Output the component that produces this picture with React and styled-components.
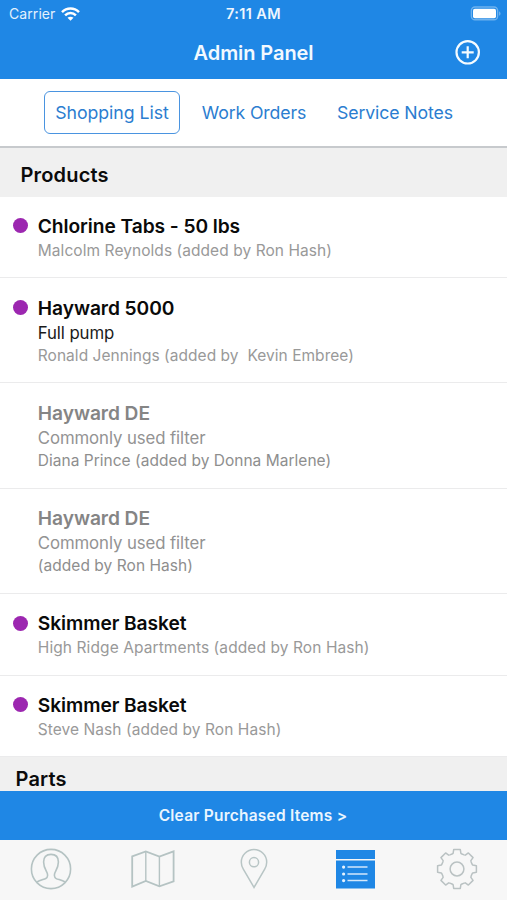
import React from "react";
import styled, { createGlobalStyle } from "styled-components";

const BLUE = "#1f87e5";
const LINE = "#b5c3c3";

const GlobalStyle = createGlobalStyle`
  * { box-sizing: border-box; }
  body { margin: 0; background: #fff; font-family: "Inter", sans-serif; }
`;

const Screen = styled.div`
  display: flex;
  flex-direction: column;
  width: 507px;
  height: 900px;
  overflow: hidden;
  background: #fff;
`;

const Header = styled.header`
  display: flex;
  flex-direction: column;
  flex: none;
  height: 79px;
  background: ${BLUE};
  color: #fff;
`;

const StatusBar = styled.div`
  display: grid;
  grid-template-columns: 1fr auto 1fr;
  align-items: center;
  height: 27px;
  padding: 0 6px 0 9px;
`;

const Carrier = styled.div`
  display: flex;
  align-items: center;
  gap: 6px;
  color: #e3f1fd;
  font-size: 14px;
  letter-spacing: 0.08px;
`;

const Clock = styled.div`
  padding-right: 3px;
  font-size: 14.5px;
  font-weight: 600;
  letter-spacing: 0.4px;
  color: #eef6fe;
`;

const Battery = styled.svg`
  justify-self: end;
`;

const NavBar = styled.div`
  display: grid;
  grid-template-columns: 1fr auto 1fr;
  align-items: center;
  height: 51px;
  padding: 0 26px;
`;

const Title = styled.h1`
  grid-column: 2;
  margin: 0;
  font-size: 20px;
  font-weight: 600;
  letter-spacing: -0.08px;
  line-height: 24px;
  color: #f2f9ff;
`;

const AddButton = styled.button`
  display: flex;
  justify-self: end;
  padding: 0;
  border: 0;
  background: none;
`;

const Tabs = styled.nav`
  display: flex;
  align-items: center;
  flex: none;
  height: 69px;
  padding: 0 0 1px 44px;
  gap: 2px;
  border-bottom: 2px solid #c7cacd;
`;

const Tab = styled.button`
  height: 43px;
  width: ${(p) => p.$width}px;
  padding: 1px 0 0;
  border: 1.5px solid ${(p) => (p.$active ? "#4a94e0" : "transparent")};
  border-radius: 6px;
  background: none;
  color: #2b7dd0;
  font: 400 17.7px "Inter", sans-serif;
  letter-spacing: ${(p) => p.$spacing}px;
  white-space: nowrap;
`;

const List = styled.main`
  flex: 1;
  min-height: 0;
  overflow: hidden;
`;

const SectionHeader = styled.h2`
  margin: 0;
  height: 48.5px;
  padding-left: ${(p) => p.$inset}px;
  background: #f0f0f0;
  color: #0b0b0b;
  font-size: 20px;
  font-weight: 600;
  line-height: ${(p) => p.$line}px;
  letter-spacing: 0.17px;
`;

const Row = styled.article`
  display: grid;
  grid-template-columns: 24.8px 1fr;
  height: ${(p) => (p.$tall ? 105.2 : 81.8)}px;
  padding: 17.6px 0 0 13px;
  border-bottom: 1.4px solid #ebebec;
`;

const Dot = styled.span`
  width: 15px;
  height: 15px;
  margin-top: 4.2px;
  border-radius: 50%;
  background: ${(p) => (p.$on ? "#9c27b0" : "transparent")};
`;

const RowText = styled.div`
  display: flex;
  flex-direction: column;
  white-space: pre;
`;

const Name = styled.div`
  color: ${(p) => (p.$muted ? "#858585" : "#0a0a0a")};
  font-size: 19.2px;
  font-weight: 600;
  line-height: 24.5px;
  letter-spacing: -0.07px;
`;

const Detail = styled.div`
  padding-top: 0.4px;
  color: ${(p) => (p.$muted ? "#939393" : "#1a1a1a")};
  font-size: 16.8px;
  line-height: 24.5px;
  letter-spacing: -0.1px;
`;

const Note = styled.div`
  margin-top: ${(p) => (p.$direct ? 1 : -0.2)}px;
  color: ${(p) => (p.$muted ? "#8e8e8e" : "#999")};
  font-size: 15.5px;
  line-height: 22px;
  letter-spacing: ${(p) => p.$spacing}px;
`;

const ClearButton = styled.button`
  flex: none;
  height: 49px;
  border: 0;
  padding: 0 1px 0 0;
  background: ${BLUE};
  color: #eaf5ff;
  font: 600 15.5px "Inter", sans-serif;
  letter-spacing: 0.22px;
`;

const TabBar = styled.footer`
  display: grid;
  grid-template-columns: repeat(5, 1fr);
  flex: none;
  height: 60px;
  background: #f7f7f7;
`;

const TabItem = styled.button`
  display: flex;
  align-items: center;
  justify-content: center;
  padding: 0 0 2px 1.4px;
  border: 0;
  background: none;
`;

const ITEMS = [
  { name: "Chlorine Tabs - 50 lbs", note: "Malcolm Reynolds (added by Ron Hash)", spacing: 0.06 },
  { name: "Hayward 5000", detail: "Full pump", note: "Ronald Jennings (added by  Kevin Embree)", spacing: 0.04 },
  { name: "Hayward DE", detail: "Commonly used filter", note: "Diana Prince (added by Donna Marlene)", spacing: 0.02, done: true },
  { name: "Hayward DE", detail: "Commonly used filter", note: "(added by Ron Hash)", spacing: 0.05, done: true },
  { name: "Skimmer Basket", note: "High Ridge Apartments (added by Ron Hash)", spacing: 0.09 },
  { name: "Skimmer Basket", note: "Steve Nash (added by Ron Hash)", spacing: 0.06 },
];

const WifiIcon = () => (
  <svg width="19" height="14" viewBox="0 0 19 14" fill="none" stroke="#fff" strokeWidth="2.5">
    <path d="M1 5.1C5.8.3 13.2.3 18 5.1" />
    <path d="M4.1 8.3c3-3 7.8-3 10.8 0" />
    <path d="M9.5 13.8 6.5 10.8c1.7-1.5 4.3-1.5 6 0z" fill="#fff" stroke="none" />
  </svg>
);

const BatteryIcon = () => (
  <Battery width="31" height="15" viewBox="0 0 31 15">
    <rect x="1.4" y="1" width="26.2" height="12.8" rx="3.6" fill="none" stroke="#6fb2ee" strokeWidth="1.4" />
    <rect x="3" y="2.7" width="23" height="9.6" rx="1.8" fill="#fff" />
    <path d="M29.2 5.2c1.7.8 1.7 3.8 0 4.6z" fill="#7dbaf0" />
  </Battery>
);

const AddIcon = () => (
  <svg width="26" height="26" viewBox="0 0 26 26" fill="none" stroke="#f5fbff" strokeWidth="2.2">
    <circle cx="12.7" cy="12.3" r="11.2" />
    <path d="M12.7 6.3v12M6.7 12.3h12" />
  </svg>
);

const ProfileIcon = () => (
  <svg width="42" height="42" viewBox="0 0 42 42" fill="none" stroke={LINE} strokeWidth="1.6">
    <circle cx="21" cy="21" r="19.6" />
    <path d="M7 34c2.8-1.9 6.6-2.4 8.8-3.4 2.3-1.1 2.1-4.3 1-6.4-1.4-2.6-3.2-5.4-3.2-10.2 0-4.8 2.4-7.6 7.4-7.6s7.4 2.8 7.4 7.6c0 4.8-1.8 7.6-3.2 10.2-1.1 2.1-1.3 5.3 1 6.4 2.2 1 6 1.5 8.8 3.4" />
  </svg>
);

const MapIcon = () => (
  <svg width="44" height="40" viewBox="0 0 44 40" fill="none" stroke={LINE}>
    <path d="M1.2 7.4 14.8 2.4 28.4 7.6 42.6 2.4V32.4L28.4 37.4 14.8 32 1.2 37.6z" strokeWidth="1.8" />
    <path d="M14.8 2.4V32M28.4 7.6V37.4" strokeWidth="1.4" />
  </svg>
);

const PinIcon = () => (
  <svg width="28" height="42" viewBox="0 0 28 42" fill="none" stroke="#b8c5c5" strokeWidth="1.5">
    <path d="M14 39.4 3.3 21.2C2 18.9 1.3 16.8 1.3 14.2a12.7 12.7 0 0 1 25.4 0c0 2.6-.7 4.7-2 7z" />
    <circle cx="14" cy="14.2" r="4.6" />
  </svg>
);

const ListIcon = () => (
  <svg width="39" height="39" viewBox="0 0 39 39">
    <path d="M0 0h39v9H0zM0 10.5h39V38.5H0z" fill={BLUE} />
    <path d="M11.5 17.1h20M11.5 24h20M11.5 30.6h20" stroke="#d4e8fb" strokeWidth="1.5" />
    <g fill="#e6f2fd">
      <circle cx="7.6" cy="17.1" r="1.6" />
      <circle cx="7.6" cy="24" r="1.6" />
      <circle cx="7.6" cy="30.6" r="1.6" />
    </g>
  </svg>
);

// Eight-toothed outline: each tooth is drawn pointing up, then turned by 45 degrees.
const gearPath = () => {
  const tooth = [[-5, -15], [-3.9, -15.7], [-3.3, -19.4], [3.3, -19.4], [3.9, -15.7], [5, -15]];
  const points = [];
  for (let i = 0; i < 8; i += 1) {
    const a = (i * Math.PI) / 4;
    tooth.forEach(([x, y]) => {
      points.push(`${(x * Math.cos(a) - y * Math.sin(a)).toFixed(2)} ${(x * Math.sin(a) + y * Math.cos(a)).toFixed(2)}`);
    });
  }
  return `M${points.join("L")}Z`;
};

const GearIcon = () => (
  <svg width="42" height="42" viewBox="-21 -21 42 42" fill="none" stroke="#bac2c3" strokeWidth="1.5" strokeLinejoin="round">
    <path d={gearPath()} />
    <circle r="6.9" />
  </svg>
);

export default function App() {
  return (
    <Screen>
      <GlobalStyle />
      <Header>
        <StatusBar>
          <Carrier>Carrier<WifiIcon /></Carrier>
          <Clock>7:11 AM</Clock>
          <BatteryIcon />
        </StatusBar>
        <NavBar>
          <Title>Admin Panel</Title>
          <AddButton aria-label="Add"><AddIcon /></AddButton>
        </NavBar>
      </Header>
      <Tabs>
        <Tab $active $width={136} $spacing={-0.03}>Shopping List</Tab>
        <Tab $width={144} $spacing={-0.12}>Work Orders</Tab>
        <Tab $width={134} $spacing={-0.11}>Service Notes</Tab>
      </Tabs>
      <List>
        <SectionHeader $inset={20.5} $line={54}>Products</SectionHeader>
        {ITEMS.map((item, i) => (
          <Row key={i} $tall={Boolean(item.detail)}>
            <Dot $on={!item.done} />
            <RowText>
              <Name $muted={item.done}>{item.name}</Name>
              {item.detail && <Detail $muted={item.done}>{item.detail}</Detail>}
              <Note $direct={!item.detail} $muted={item.done} $spacing={item.spacing}>{item.note}</Note>
            </RowText>
          </Row>
        ))}
        <SectionHeader $inset={15.5} $line={44}>Parts</SectionHeader>
      </List>
      <ClearButton>Clear Purchased Items &gt;</ClearButton>
      <TabBar>
        <TabItem aria-label="Profile"><ProfileIcon /></TabItem>
        <TabItem aria-label="Map"><MapIcon /></TabItem>
        <TabItem aria-label="Location"><PinIcon /></TabItem>
        <TabItem aria-label="Lists"><ListIcon /></TabItem>
        <TabItem aria-label="Settings"><GearIcon /></TabItem>
      </TabBar>
    </Screen>
  );
}
